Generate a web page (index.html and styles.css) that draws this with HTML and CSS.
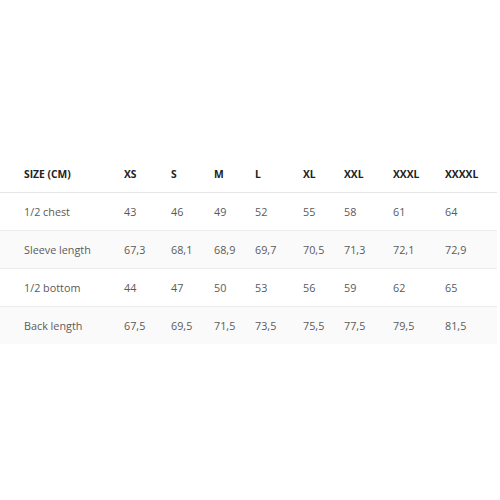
FILE: index.html
```html
<!DOCTYPE html>
<html>
<head>
<meta charset="utf-8">
<link rel="stylesheet" href="styles.css">
</head>
<body>
<div class="page">
  <table class="sizes">
    <colgroup>
      <col class="c0"><col class="c1"><col class="c2"><col class="c3"><col class="c4"><col class="c5"><col class="c6"><col class="c7"><col class="c8">
    </colgroup>
    <thead>
      <tr><th>SIZE (CM)</th><th>XS</th><th>S</th><th>M</th><th>L</th><th>XL</th><th>XXL</th><th>XXXL</th><th>XXXXL</th></tr>
    </thead>
    <tbody>
      <tr><td>1/2 chest</td><td>43</td><td>46</td><td>49</td><td>52</td><td>55</td><td>58</td><td>61</td><td>64</td></tr>
      <tr class="alt"><td>Sleeve length</td><td>67,3</td><td>68,1</td><td>68,9</td><td>69,7</td><td>70,5</td><td>71,3</td><td>72,1</td><td>72,9</td></tr>
      <tr><td>1/2 bottom</td><td>44</td><td>47</td><td>50</td><td>53</td><td>56</td><td>59</td><td>62</td><td>65</td></tr>
      <tr class="alt"><td>Back length</td><td>67,5</td><td>69,5</td><td>71,5</td><td>73,5</td><td>75,5</td><td>77,5</td><td>79,5</td><td>81,5</td></tr>
    </tbody>
  </table>
</div>
</body>
</html>
```
FILE: styles.css
```css
html, body {
  margin: 0;
  padding: 0;
  background: #ffffff;
}
.page {
  padding-top: 155px;
  width: 497px;
}
.sizes {
  width: 497px;
  border-collapse: collapse;
  table-layout: fixed;
  font-family: "Open Sans", "Liberation Sans", sans-serif;
  font-size: 10.8px;
  color: #5a5a5a;
}
.c0 { width: 100px; }
.c1 { width: 47px; }
.c2 { width: 43px; }
.c3 { width: 41px; }
.c4 { width: 48px; }
.c5 { width: 41px; }
.c6 { width: 49px; }
.c7 { width: 52px; }
.c8 { width: 76px; }
.sizes th, .sizes td {
  text-align: left;
  padding: 0 0 0 24px;
  height: 37px;
  white-space: nowrap;
}
.sizes th {
  font-weight: 700;
  color: #222222;
  font-size: 10.3px;
  border-bottom: 1px solid #e6e6e6;
}
.sizes tbody tr {
  border-bottom: 1px solid #ececec;
}
.sizes tbody tr:last-child {
  border-bottom: none;
}
.sizes tr.alt {
  background: #fafafa;
}
```
